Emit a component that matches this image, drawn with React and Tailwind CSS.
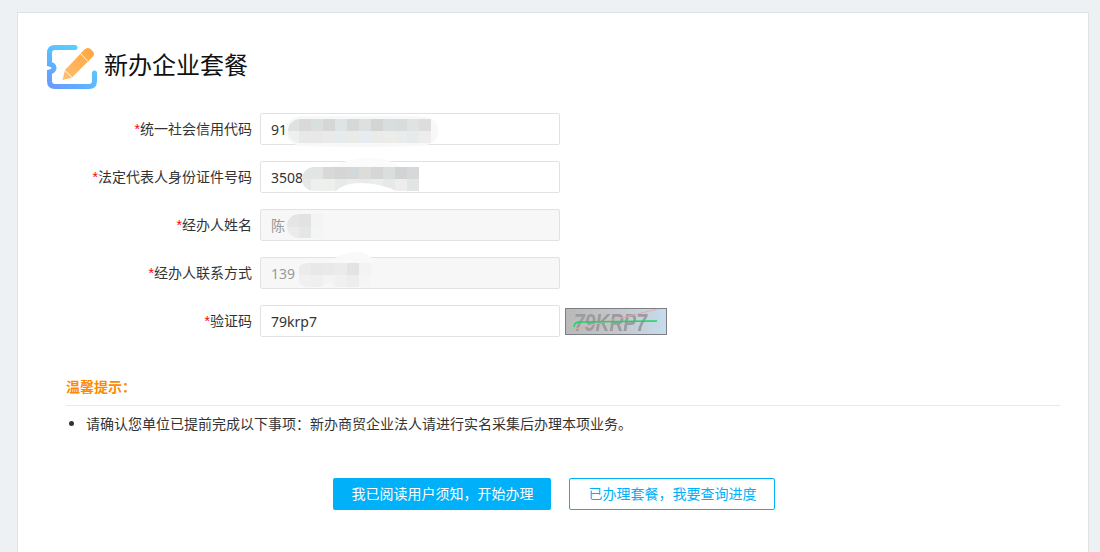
// rel coords are from the input's top-left corner
const mosaics = {
  统一社会信用代码: {
    id: 'm1',
    clip: 'M40 6H171V30H40A12 12 0 0 1 40 6Z',
    veil: 'M40 3H120Q150 3 165 4Q178 6 178 18Q178 32 160 33Q100 35 40 33Q26 30 26 18Q26 5 40 3Z',
    veilFill: '#f7f8f8',
    x: 27,
    rows: [
      ['#dfe0e0', '#d9d9d9', '#d8dfdd', '#d6d6d6', '#dde4e3', '#d6d7d8', '#dedfdf', '#d3d5d2', '#d8dddd', '#d8dcdc', '#e1e3e3', '#dedcde'],
      ['#eef0ef', '#e7e8e7', '#e8e8e8', '#eaeaea', '#e6ecec', '#eaeae6', '#e6ecef', '#ebebe9', '#ecece9', '#e8eceb', '#e6eaeb', '#ededed'],
    ],
  },
  法定代表人身份证件号码: {
    id: 'm2',
    clip: 'M54 6H159V30H136Q120 22 100 22Q84 22 76 30H54A12 12 0 0 1 54 6Z',
    veil: 'M70 6Q90 -3 110 -3Q130 -3 140 6Z',
    veilFill: '#fbfbfb',
    x: 39,
    rows: [
      ['#e3e5e5', '#e1e5e5', '#d8d9d6', '#d5d5d5', '#d3d8d9', '#dcdcd9', '#d6d6d8', '#d9dfdf', '#d2d3d2', '#d5d9dc'],
      ['#e6e8e8', '#eef0ee', '#eef0ee', '#e8eaea', '#ececea', '#e9e9ea', '#eaeded', '#e8e8e8', '#ededed', '#e3e4e4'],
    ],
  },
  经办人姓名: {
    id: 'm3',
    clip: 'M39 5H63V29H39A12 12 0 0 1 39 5Z',
    x: 27,
    rows: [
      ['#e5e5e5', '#e2e2e2', '#f3f4f4'],
      ['#ebebeb', '#e6e6e6', '#f4f5f5'],
    ],
  },
  经办人联系方式: {
    id: 'm4',
    clip: 'M48 6H111V30H75Q68 22 61 30H48A12 12 0 0 1 48 6Z',
    veil: 'M66 6Q85 -6 100 -5Q113 -3 113 6Z',
    veilFill: '#f9f9f9',
    x: 39,
    rows: [
      ['#ebebeb', '#e8e8e8', '#e9e9e9', '#ebebeb', '#e3e3e3', '#f2f3f3'],
      ['#f0f0f0', '#efefef', '#f3f3f3', '#f0f0f0', '#ededed', '#f5f5f5'],
    ],
  },
};

const fields = [
  { label: '统一社会信用代码', value: '91' },
  { label: '法定代表人身份证件号码', value: '3508' },
  { label: '经办人姓名', value: '陈', disabled: true },
  { label: '经办人联系方式', value: '139', disabled: true },
  { label: '验证码', value: '79krp7' },
];

const Logo = () => (
  <svg width="50" height="44" viewBox="0 0 50 44" fill="none">
    <defs>
      <linearGradient id="ticket" x1="0" y1="44" x2="30" y2="0" gradientUnits="userSpaceOnUse">
        <stop offset="0" stopColor="#6a96ff" />
        <stop offset="1" stopColor="#55d3ff" />
      </linearGradient>
      <linearGradient id="pencil" x1="16" y1="34" x2="46" y2="4" gradientUnits="userSpaceOnUse">
        <stop offset="0" stopColor="#ffbe70" />
        <stop offset="1" stopColor="#ffa63f" />
      </linearGradient>
    </defs>
    <path d="M28 2.5H8Q2.5 2.5 2.5 8V19Q7 20 7 23T2.5 27V36Q2.5 41.5 8 41.5H42Q47.5 41.5 47.5 36V28" stroke="url(#ticket)" strokeWidth="5" strokeLinecap="round" />
    <path d="M15.5 35L18 25L37.5 4.5Q40 2 43 3.5L46 6.5Q48 9 46 11.5L25 32.5Z" fill="url(#pencil)" />
    <path d="M18 25.5L25 32.5M33.5 8.5L41 16.5" stroke="#fff" strokeWidth="1" />
  </svg>
);

const Captcha = () => (
  <svg width="102" height="27" viewBox="0 0 102 27" className="shrink-0 blur-[0.5px]">
    <defs>
      <linearGradient id="captcha" x1="0" y1="0" x2="102" y2="0" gradientUnits="userSpaceOnUse">
        <stop offset="0" stopColor="#b9b9b9" />
        <stop offset="0.5" stopColor="#c4c6c9" />
        <stop offset="1" stopColor="#c6dcee" />
      </linearGradient>
    </defs>
    <rect x="0.5" y="0.5" width="101" height="26" fill="url(#captcha)" stroke="#7b7f84" />
    <text x="9" y="23" fontFamily="Liberation Sans, sans-serif" fontSize="24" fontWeight="700" fontStyle="italic" fill="#9a9ca0" textLength="73" lengthAdjust="spacingAndGlyphs">79KRP7</text>
    <path d="M10 21L93 1" stroke="#e8a8a8" strokeWidth="1" fill="none" />
    <path d="M9 19Q9 14 15 14L92 13" stroke="#14d860" strokeWidth="1.5" fill="none" />
  </svg>
);

// pixelated cover over the private part of a value
const Mosaic = ({ data }) => (
  <svg width="300" height="32" viewBox="0 0 300 32" className="pointer-events-none absolute left-0 top-0 overflow-visible">
    <clipPath id={data.id}><path d={data.clip} /></clipPath>
    {data.veil && <path d={data.veil} fill={data.veilFill} />}
    <g clipPath={`url(#${data.id})`}>
      {data.rows.map((row, r) => row.map((fill, c) => (
        <rect key={`${r}-${c}`} x={data.x + c * 12} y={r === 0 ? 5 : 18} width="12" height="13" fill={fill} />
      )))}
    </g>
  </svg>
);

const Field = ({ label, value, disabled }) => (
  <div className="flex h-8 items-center">
    <label className="w-[242px] shrink-0 pr-[8px] text-right text-sm text-[#333]">
      <span className="font-['Liberation_Sans'] text-[#f00]">*</span>{label}
    </label>
    <div className="relative h-8 w-[300px] shrink-0">
      <input
        readOnly
        value={value}
        className={`h-8 w-full rounded-[2px] border border-[#e2e2e2] px-[10px] text-sm outline-none ${disabled ? 'bg-[#f7f7f7] text-[#999]' : 'bg-white text-[#333]'}`}
      />
      {mosaics[label] && <Mosaic data={mosaics[label]} />}
    </div>
    {label === '验证码' && <div className="ml-[5px] mt-[1px] flex"><Captcha /></div>}
  </div>
);

export default function App() {
  return (
    <div className="h-[552px] overflow-hidden bg-[#eef1f4] pl-[17px] pr-[11px] pt-3 font-['Noto_Sans','Noto_Sans_CJK_SC',sans-serif]">
      <div className="h-[600px] border border-[#dfe3e6] bg-white">
        <div className="mt-8 flex h-[44px] items-center pl-[29px]">
          <Logo />
          <h1 className="mb-[4px] ml-[7px] text-2xl font-normal text-[#111]">新办企业套餐</h1>
        </div>
        <form className="mt-6 flex flex-col gap-4">
          {fields.map((f) => <Field key={f.label} {...f} />)}
        </form>
        <div className="mx-[48px] mt-10 w-[994px]">
          <h3 className="border-b border-[#e8e8e8] pb-2 text-sm font-bold text-[#ff8a00]">温馨提示：</h3>
          <ul className="mt-2 list-disc pl-5 text-sm text-[#333]">
            <li>请确认您单位已提前完成以下事项：新办商贸企业法人请进行实名采集后办理本项业务。</li>
          </ul>
        </div>
        <div className="mt-[44px] flex justify-center gap-[18px] pl-[1px]">
          <button className="h-8 w-[218px] rounded-[2px] bg-[#00b0f9] pl-[2px] text-sm text-white">我已阅读用户须知，开始办理</button>
          <button className="h-8 w-[206px] rounded-[2px] border border-[#00b0f9] bg-white pl-[2px] text-sm text-[#00b0f9]">已办理套餐，我要查询进度</button>
        </div>
      </div>
    </div>
  );
}
